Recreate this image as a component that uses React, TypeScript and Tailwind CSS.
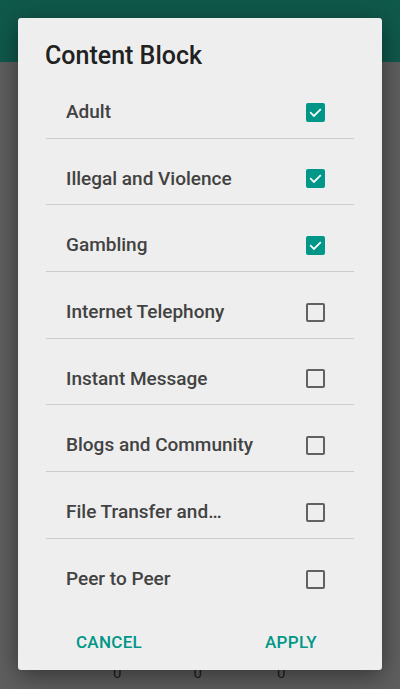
import React, { useState } from "react";

const categories = [
  { label: "Adult", checked: true },
  { label: "Illegal and Violence", checked: true },
  { label: "Gambling", checked: true },
  { label: "Internet Telephony", checked: false },
  { label: "Instant Message", checked: false },
  { label: "Blogs and Community", checked: false },
  { label: "File Transfer and…", checked: false },
  { label: "Peer to Peer", checked: false },
];

function Checkbox({ checked, onClick }: { checked: boolean; onClick: () => void }) {
  if (checked) {
    return (
      <button onClick={onClick} className="w-[19px] h-[19px] rounded-[2px] bg-[#009688] flex items-center justify-center">
        <svg width="15" height="15" viewBox="0 0 24 24" fill="none">
          <path d="M4.5 12.5l5 5L19.5 7.5" stroke="white" strokeWidth="2.8" strokeLinecap="square" />
        </svg>
      </button>
    );
  }
  return (
    <button onClick={onClick} className="w-[19px] h-[19px] rounded-[2px] border-2 border-[#616161]" />
  );
}

export default function App() {
  const [items, setItems] = useState(categories);

  const toggle = (i: number) =>
    setItems(items.map((it, j) => (j === i ? { ...it, checked: !it.checked } : it)));

  return (
    <div className="relative h-[689px] w-[400px] overflow-hidden bg-[#5f5f5f] font-['Roboto',sans-serif]">
      {/* Page behind the scrim */}
      <div className="h-[62px] bg-[#0f594b]" />
      <div className="pt-[600px] flex text-[#1c1c1c] text-[15px]">
        <span className="ml-[113px]">0</span>
        <span className="ml-[72px]">0</span>
        <span className="ml-[75px]">0</span>
      </div>

      {/* Dialog */}
      <div className="absolute left-[18px] top-[18px] w-[364px] h-[652px] rounded-[3px] bg-[#eeeeee] shadow-[0_6px_24px_rgba(0,0,0,0.45)] flex flex-col">
        <h2 className="pl-[27px] pt-[22px] h-[53px] leading-[32px] text-[25px] font-medium text-[#212121]">
          Content Block
        </h2>

        <div className="mx-[28px] pt-[1px]">
          {items.map((it, i) => (
            <div
              key={it.label}
              className={
                "h-[66.67px] pt-[15px] pl-[20px] pr-[29px] flex items-center justify-between " +
                (i < items.length - 1 ? "border-b border-[#cccccc]" : "")
              }
            >
              <span className="text-[19px] font-medium text-[#424242] whitespace-nowrap">
                {it.label}
              </span>
              <Checkbox checked={it.checked} onClick={() => toggle(i)} />
            </div>
          ))}
        </div>

        <div className="grid grid-cols-2 h-[64px] pt-[10px] items-center text-center">
          <button className="text-[17px] font-medium text-[#009688] tracking-[0.3px]">CANCEL</button>
          <button className="text-[17px] font-medium text-[#009688] tracking-[0.3px]">APPLY</button>
        </div>
      </div>
    </div>
  );
}
